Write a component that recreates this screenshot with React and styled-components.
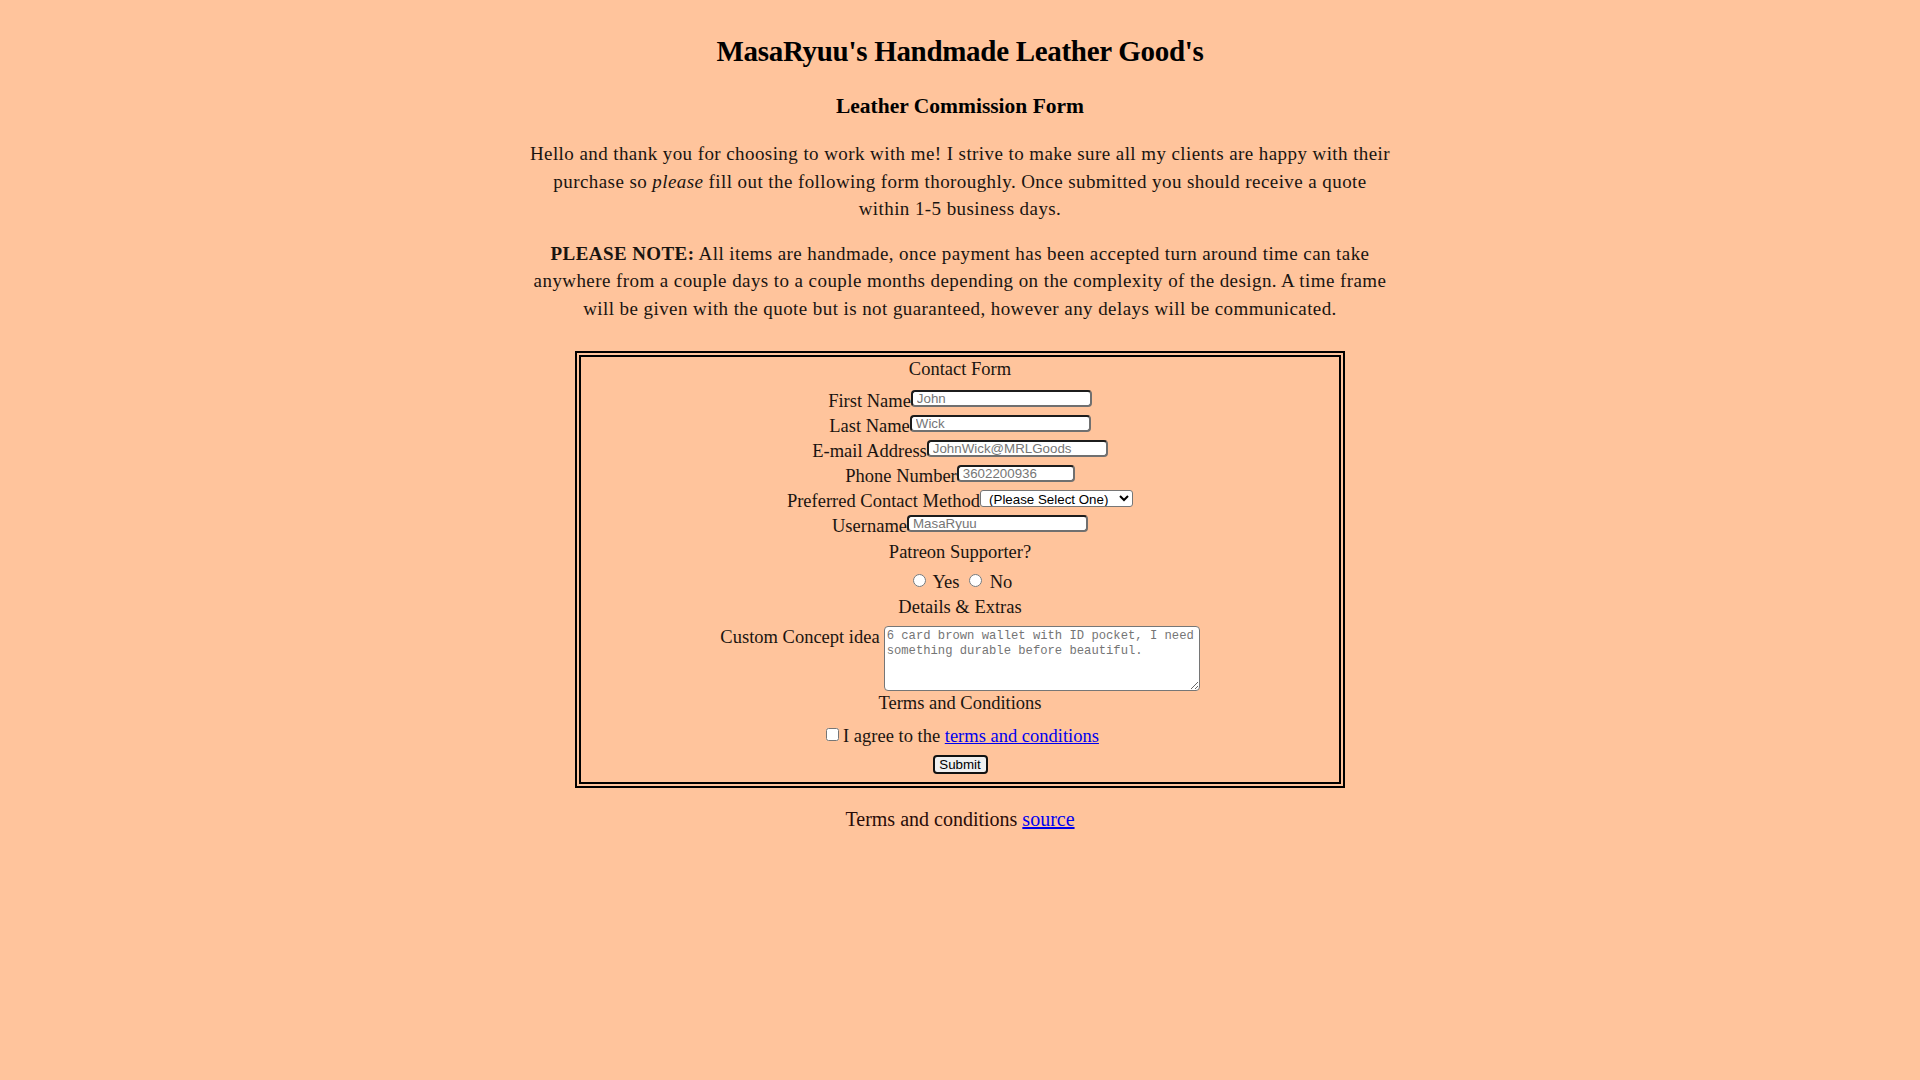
import styled, { createGlobalStyle } from "styled-components";

const GlobalStyle = createGlobalStyle`
  body {
    margin: 0;
    background-color: #ffc49c;
    color: #1a1410;
    font-family: "Liberation Serif", "Times New Roman", serif;
  }
`;

const Page = styled.main`
  display: flex;
  flex-direction: column;
  align-items: center;
  padding-top: 34px;
  min-height: 1080px;
  box-sizing: border-box;
`;

const Title = styled.h1`
  margin: 0;
  font: 700 29px/34px "Liberation Serif", serif;
  letter-spacing: -0.3px;
  color: #000;
`;

const Subtitle = styled.h2`
  margin: 24px 0 0;
  font: 700 21.5px/28px "Liberation Serif", serif;
  color: #000;
`;

const Intro = styled.p`
  margin: ${(p) => p.$top}px 0 0;
  width: 900px;
  text-align: center;
  font-size: 19px;
  letter-spacing: 0.42px;
  line-height: 27.5px;
`;

const FormBox = styled.form`
  margin-top: 29px;
  width: 770px;
  box-sizing: border-box;
  border: 6px double #000;
  padding: 0 0 8px;
  display: flex;
  flex-direction: column;
  align-items: center;
  font-size: 18.5px;
`;

const SectionTitle = styled.div`
  margin-top: ${(p) => p.$top || 0}px;
  height: ${(p) => p.$h || 22}px;
  line-height: ${(p) => p.$h || 22}px;
`;

const FieldRow = styled.div`
  display: flex;
  justify-content: center;
  align-items: flex-end;
  height: 25px;
`;

const Label = styled.label`
  line-height: 18px;
  margin-bottom: -3px;
  white-space: nowrap;
`;

const TextInput = styled.input`
  width: ${(p) => p.$w}px;
  height: 17px;
  box-sizing: border-box;
  padding: 0 4px;
  border-width: 2px;
  border-style: solid;
  border-color: #1c1c1c #707070 #707070 #1c1c1c;
  border-radius: 4px;
  background: #fff;
  font: 13.33px/13px "Liberation Sans", Arial, sans-serif;
  &::placeholder {
    color: #767676;
  }
`;

const Select = styled.select`
  width: 153px;
  height: 17px;
  box-sizing: border-box;
  padding: 0 0 0 4px;
  border: 1px solid #767676;
  border-radius: 3px;
  background: #fff;
  color: #000;
  font: 13.33px "Liberation Sans", Arial, sans-serif;
`;

const ChoiceRow = styled.div`
  margin-top: ${(p) => p.$top}px;
  height: 22px;
  line-height: 22px;
  text-align: center;
  white-space: nowrap;
  input {
    margin: 3px ${(p) => p.$gap}px 0 5px;
    vertical-align: top;
  }
`;

const ConceptRow = styled.div`
  margin-top: 8px;
  display: flex;
  justify-content: center;
  align-items: flex-start;
  gap: 4px;
`;

const ConceptLabel = styled.label`
  line-height: 22px;
`;

const TextArea = styled.textarea`
  width: 316px;
  height: 65px;
  box-sizing: border-box;
  margin: 0;
  padding: 2px 2px;
  border: 1px solid #767676;
  border-radius: 4px;
  background: #fff;
  resize: both;
  font: 12.2px/15px "Liberation Mono", "DejaVu Sans Mono", monospace;
  &::placeholder {
    color: #757575;
  }
`;

const Link = styled.a`
  color: #0000ee;
  text-decoration: underline;
`;

const SubmitButton = styled.button`
  margin-top: 8px;
  width: 55px;
  height: 19px;
  box-sizing: border-box;
  padding: 0;
  border: 2px solid #111;
  border-radius: 4px;
  background: #efefef;
  color: #000;
  font: 13.33px/15px "Liberation Sans", Arial, sans-serif;
`;

const Footer = styled.p`
  margin: 20px 0 0;
  font-size: 20px;
  line-height: 22px;
  color: #2a0c08;
`;

const fields = [
  { label: "First Name", placeholder: "John", w: 181 },
  { label: "Last Name", placeholder: "Wick", w: 181 },
  { label: "E-mail Address", placeholder: "JohnWick@MRLGoods", w: 181 },
  { label: "Phone Number", placeholder: "3602200936", w: 118 },
];

function App() {
  return (
    <>
      <GlobalStyle />
      <Page>
        <Title>MasaRyuu's Handmade Leather Good's</Title>
        <Subtitle>Leather Commission Form</Subtitle>
        <Intro $top={20}>
          Hello and thank you for choosing to work with me! I strive to make sure all my clients are happy with their
          <br />
          purchase so <em>please</em> fill out the following form thoroughly. Once submitted you should receive a quote
          <br />
          within 1-5 business days.
        </Intro>
        <Intro $top={17}>
          <strong>PLEASE NOTE:</strong> All items are handmade, once payment has been accepted turn around time can take
          <br />
          anywhere from a couple days to a couple months depending on the complexity of the design. A time frame
          <br />
          will be given with the quote but is not guaranteed, however any delays will be communicated.
        </Intro>

        <FormBox onSubmit={(e) => e.preventDefault()}>
          <SectionTitle $h={25}>Contact Form</SectionTitle>
          {fields.map((f) => (
            <FieldRow key={f.label}>
              <Label>{f.label}</Label>
              <TextInput $w={f.w} placeholder={f.placeholder} />
            </FieldRow>
          ))}
          <FieldRow>
            <Label>Preferred Contact Method</Label>
            <Select defaultValue="">
              <option value="">(Please Select One)</option>
              <option>E-mail</option>
              <option>Phone</option>
            </Select>
          </FieldRow>
          <FieldRow>
            <Label>Username</Label>
            <TextInput $w={181} placeholder="MasaRyuu" />
          </FieldRow>

          <SectionTitle $top={9}>Patreon Supporter?</SectionTitle>
          <ChoiceRow $top={8} $gap={3}>
            <input type="radio" name="patreon" /> Yes{" "}
            <input type="radio" name="patreon" /> No
          </ChoiceRow>
          <SectionTitle $top={3}>Details &amp; Extras</SectionTitle>
          <ConceptRow>
            <ConceptLabel>Custom Concept idea</ConceptLabel>
            <TextArea placeholder="6 card brown wallet with ID pocket, I need something durable before beautiful." />
          </ConceptRow>
          <SectionTitle $top={1}>Terms and Conditions</SectionTitle>
          <ChoiceRow $top={11} $gap={4}>
            <input type="checkbox" />I agree to the <Link href="#">terms and conditions</Link>
          </ChoiceRow>
          <SubmitButton type="submit">Submit</SubmitButton>
        </FormBox>

        <Footer>
          Terms and conditions <Link href="#">source</Link>
        </Footer>
      </Page>
    </>
  );
}

export default App;
